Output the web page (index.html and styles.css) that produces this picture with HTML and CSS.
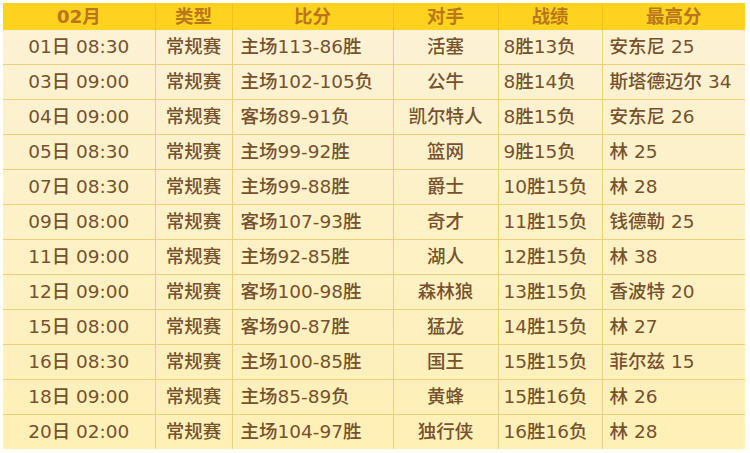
FILE: index.html
```html
<!DOCTYPE html>
<html lang="zh">
<head>
<meta charset="utf-8">
<title>02月 赛程</title>
<link rel="stylesheet" href="styles.css">
</head>
<body>
<table class="sched">
  <colgroup>
    <col class="c-date"><col class="c-type"><col class="c-score"><col class="c-opp"><col class="c-rec"><col class="c-top">
  </colgroup>
  <thead>
    <tr><th>02月</th><th>类型</th><th>比分</th><th>对手</th><th>战绩</th><th>最高分</th></tr>
  </thead>
  <tbody>
    <tr><td class="ctr">01日 08:30</td><td class="ctr">常规赛</td><td class="lft">主场113-86胜</td><td class="ctr">活塞</td><td class="rec">8胜13负</td><td class="top">安东尼 25</td></tr>
    <tr><td class="ctr">03日 09:00</td><td class="ctr">常规赛</td><td class="lft">主场102-105负</td><td class="ctr">公牛</td><td class="rec">8胜14负</td><td class="top">斯塔德迈尔 34</td></tr>
    <tr><td class="ctr">04日 09:00</td><td class="ctr">常规赛</td><td class="lft">客场89-91负</td><td class="ctr">凯尔特人</td><td class="rec">8胜15负</td><td class="top">安东尼 26</td></tr>
    <tr><td class="ctr">05日 08:30</td><td class="ctr">常规赛</td><td class="lft">主场99-92胜</td><td class="ctr">篮网</td><td class="rec">9胜15负</td><td class="top">林 25</td></tr>
    <tr><td class="ctr">07日 08:30</td><td class="ctr">常规赛</td><td class="lft">主场99-88胜</td><td class="ctr">爵士</td><td class="rec">10胜15负</td><td class="top">林 28</td></tr>
    <tr><td class="ctr">09日 08:00</td><td class="ctr">常规赛</td><td class="lft">客场107-93胜</td><td class="ctr">奇才</td><td class="rec">11胜15负</td><td class="top">钱德勒 25</td></tr>
    <tr><td class="ctr">11日 09:00</td><td class="ctr">常规赛</td><td class="lft">主场92-85胜</td><td class="ctr">湖人</td><td class="rec">12胜15负</td><td class="top">林 38</td></tr>
    <tr><td class="ctr">12日 09:00</td><td class="ctr">常规赛</td><td class="lft">客场100-98胜</td><td class="ctr">森林狼</td><td class="rec">13胜15负</td><td class="top">香波特 20</td></tr>
    <tr><td class="ctr">15日 08:00</td><td class="ctr">常规赛</td><td class="lft">客场90-87胜</td><td class="ctr">猛龙</td><td class="rec">14胜15负</td><td class="top">林 27</td></tr>
    <tr><td class="ctr">16日 08:30</td><td class="ctr">常规赛</td><td class="lft">主场100-85胜</td><td class="ctr">国王</td><td class="rec">15胜15负</td><td class="top">菲尔兹 15</td></tr>
    <tr><td class="ctr">18日 09:00</td><td class="ctr">常规赛</td><td class="lft">主场85-89负</td><td class="ctr">黄蜂</td><td class="rec">15胜16负</td><td class="top">林 26</td></tr>
    <tr><td class="ctr">20日 02:00</td><td class="ctr">常规赛</td><td class="lft">主场104-97胜</td><td class="ctr">独行侠</td><td class="rec">16胜16负</td><td class="top">林 28</td></tr>
  </tbody>
</table>
</body>
</html>
```

FILE: styles.css
```css
html, body {
  margin: 0;
  background: #ffffff;
}
body {
  padding: 3px 5px 3px 3px;
  font-family: "DejaVu Sans", "Noto Sans CJK SC", sans-serif;
}
.sched {
  border-collapse: collapse;
  table-layout: fixed;
  width: 742px;
  background: linear-gradient(#fcf2d6, #fff0b6);
  color: #76522f;
  font-size: 18.5px;
}
.c-date { width: 152px; }
.c-type { width: 77px; }
.c-score { width: 161px; }
.c-opp { width: 105px; }
.c-rec { width: 104px; }
.c-top { width: 143px; }
.sched th {
  background: #ffd21f;
  color: #b8771a;
  font-weight: 600;
  height: 27px;
  padding: 0;
  line-height: 26px;
  border-left: 1px solid #f2c022;
  border-right: 1px solid #f2c022;
}
.sched td {
  height: 34px;
  padding: 0;
  line-height: 34px;
  font-weight: 500;
  border: 1px solid #ecd07a;
  white-space: nowrap;
  overflow: hidden;
}
.sched tbody tr:first-child td { border-top: none; }
.sched tbody tr:last-child td { border-bottom: none; }
.sched tr > :first-child { border-left: none; }
.sched tr > :last-child { border-right: none; }
.ctr { text-align: center; }
.lft { text-align: left; padding-left: 8px !important; }
.rec { text-align: left; padding-left: 5px !important; }
.top { text-align: left; padding-left: 7px !important; }
```
